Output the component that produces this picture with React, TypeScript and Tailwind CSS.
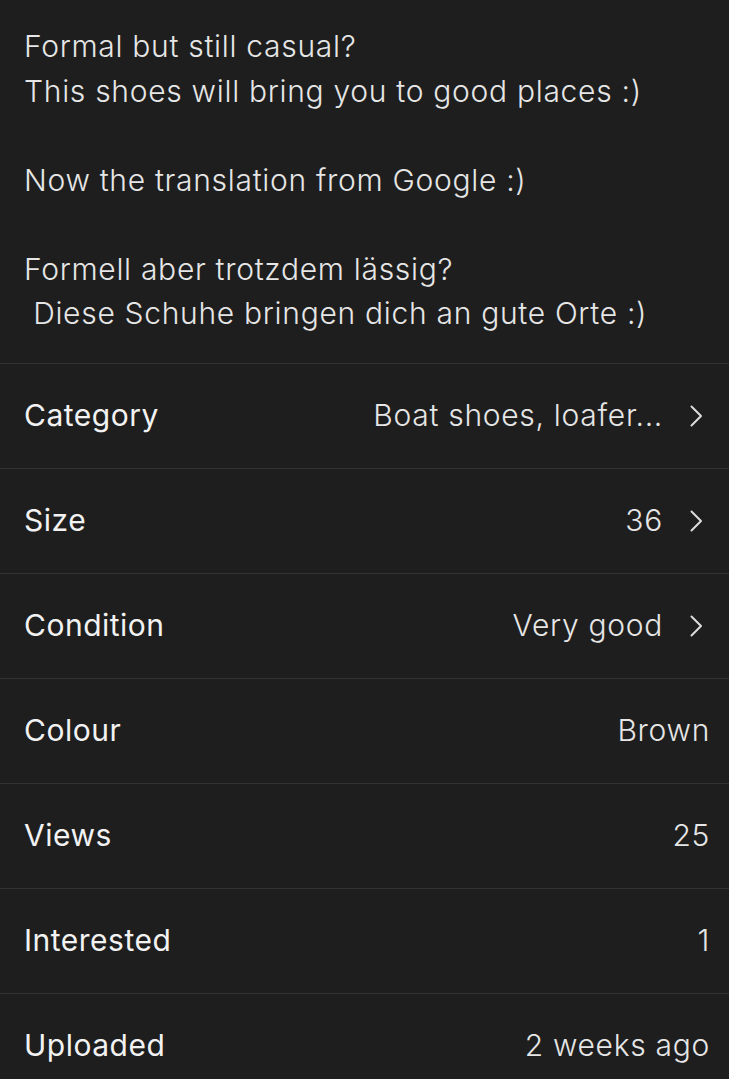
const rows: { label: string; value: string; chevron?: boolean }[] = [
  { label: 'Category', value: 'Boat shoes, loafer...', chevron: true },
  { label: 'Size', value: '36', chevron: true },
  { label: 'Condition', value: 'Very good', chevron: true },
  { label: 'Colour', value: 'Brown' },
  { label: 'Views', value: '25' },
  { label: 'Interested', value: '1' },
  { label: 'Uploaded', value: '2 weeks ago' },
];

function Chevron() {
  return (
    <svg width="14" height="24" viewBox="0 0 14 24" fill="none" className="ml-[26px] mr-[7px]">
      <path d="M2.5 2.5l9.5 9.5-9.5 9.5" stroke="#dcdcdc" strokeWidth="2" strokeLinecap="round" strokeLinejoin="round" />
    </svg>
  );
}

export default function App() {
  return (
    <div
      className="min-h-[1079px] w-full bg-[#1e1e1e] text-[#ececec]"
      style={{ fontFamily: 'Inter, Roboto, "Noto Sans", sans-serif' }}
    >
      <div className="px-6 pt-6 pb-[27px] text-[30px] leading-[44.5px] font-light tracking-[0.7px] text-[#e6e6e6] whitespace-pre-wrap">
        {'Formal but still casual?\nThis shoes will bring you to good places :)\n\nNow the translation from Google :)\n\nFormell aber trotzdem lässig?\n Diese Schuhe bringen dich an gute Orte :)'}
      </div>

      {rows.map((row) => (
        <div key={row.label} className="flex h-[105px] items-center justify-between border-t border-[#333333] pl-6 pr-[19px] text-[30px]">
          <span className="font-normal tracking-[0.5px] text-[#f2f2f2]">{row.label}</span>
          <span className="flex items-center font-light tracking-[0.7px] text-[#e6e6e6]">
            {row.value}
            {row.chevron && <Chevron />}
          </span>
        </div>
      ))}
    </div>
  );
}
